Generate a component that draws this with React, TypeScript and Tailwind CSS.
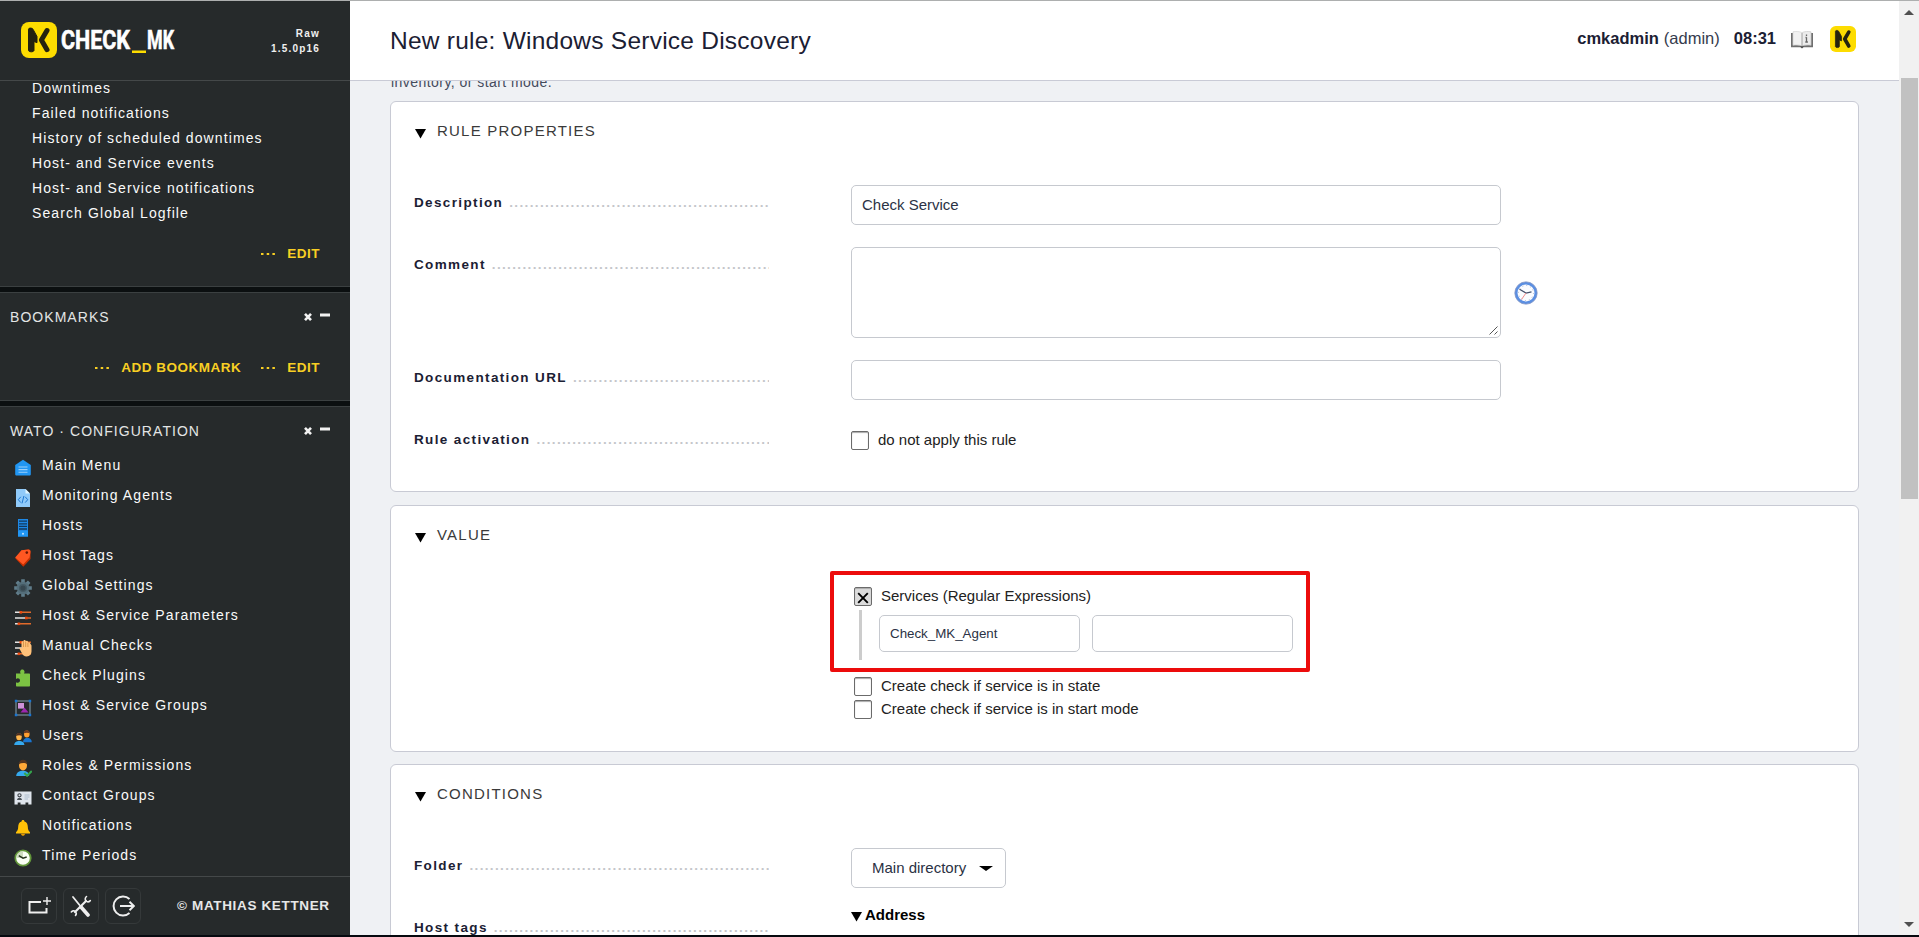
import React from "react";

const reports = [
  "Downtimes",
  "Failed notifications",
  "History of scheduled downtimes",
  "Host- and Service events",
  "Host- and Service notifications",
  "Search Global Logfile",
];

function Icon({ children }: { children: React.ReactNode }) {
  return (
    <svg width="18" height="18" viewBox="0 0 18 18" className="relative top-[3px] shrink-0">
      {children}
    </svg>
  );
}

function Sliders() {
  return (
    <>
      <path d="M1 3.3h6M1 9h10M1 14.8h3" stroke="#e4e4e4" strokeWidth="1.4" />
      <path d="M6 3.3h11M11 9h6M4 14.8h13" stroke="#e06a2b" strokeWidth="1.4" />
      <rect x="5.5" y="2" width="2.6" height="2.6" fill="#e8490f" />
      <rect x="11" y="7.7" width="2.6" height="2.6" fill="#e8490f" />
      <rect x="3.6" y="13.5" width="2.6" height="2.6" fill="#e8490f" />
    </>
  );
}

const menu: { label: string; icon: React.ReactNode }[] = [
  {
    label: "Main Menu",
    icon: (
      <>
        <path d="M9 .8 16.8 6v9.2c0 .8-.6 1.4-1.4 1.4H2.6c-.8 0-1.4-.6-1.4-1.4V6z" fill="#2196f3" />
        <path d="M4.5 8h9M4.5 10.6h9M4.5 13.2h9" stroke="#9bd0fb" strokeWidth="1.1" />
      </>
    ),
  },
  {
    label: "Monitoring Agents",
    icon: (
      <>
        <path d="M2 0h9.5l4.5 4.5V18H2z" fill="#90caf9" />
        <path d="M11.5 0v4.5H16z" fill="#e1f5fe" />
        <path d="M6.8 7.8 4.3 10.7l2.5 2.9M11.2 7.8l2.5 2.9-2.5 2.9M9.9 7 8 14.4" stroke="#1f78d1" fill="none" strokeWidth="1" />
      </>
    ),
  },
  {
    label: "Hosts",
    icon: (
      <>
        <rect x="4" y="0" width="10" height="17.5" fill="#1e88e5" />
        <path d="M5 2.2h8M5 4.8h8M5 7.4h8M5 10h8" stroke="#12395c" strokeWidth="1.3" />
        <rect x="4" y="12" width="10" height="5.5" fill="#2196f3" />
        <circle cx="9" cy="14.8" r="1" fill="#c5e6ff" />
      </>
    ),
  },
  {
    label: "Host Tags",
    icon: (
      <>
        <path d="M1.2 9.2 7.5 1.2 14.5.6c1.3 0 2 1 2 2.2V10L9.3 17.7z" fill="#c62f00" />
        <path d="M1.2 8.6 7.5 1.2 14.5.5c1.3 0 2 1 2 2.2L15.500 8.500 9.200 15.500z" fill="#ff5722" />
        <circle cx="12.8" cy="3.6" r="1.3" fill="#6b1500" />
      </>
    ),
  },
  {
    label: "Global Settings",
    icon: (
      <>
        <g stroke="#607d8b" strokeWidth="3.6">
          <path d="M9 .2v17.600M.2 9h17.600M2.800 2.800l12.400 12.400M15.200 2.800 2.800 15.200" />
        </g>
        <circle cx="9" cy="9" r="6.3" fill="#546e7a" />
        <circle cx="9" cy="9" r="3.3" fill="#37474f" stroke="#455a64" strokeWidth="1.4" />
      </>
    ),
  },
  { label: "Host & Service Parameters", icon: <Sliders /> },
  {
    label: "Manual Checks",
    icon: (
      <>
        <Sliders />
        <path d="M5.2 9.2c.6-.7 1.5-.6 2.3.3V3.3c0-1.4 1.9-1.4 2 0V2c0-1.4 2.1-1.4 2.2 0v.8c.2-1.3 2.1-1.2 2.2.1v1c.3-1.1 2-1 2.1.2l1.5 2.3v6.2c0 3-1.8 4.9-4.8 4.9-2.7 0-3.8-1.5-4.9-3.5z" fill="#ffc27a" />
        <path d="M9.5 3v5M11.7 3v5M13.9 4v4" stroke="#c98438" strokeWidth=".7" />
      </>
    ),
  },
  {
    label: "Check Plugins",
    icon: (
      <path d="M2 4.6h4.8c-1.2-1.7-.6-4.2 1.5-4.200s2.900 2.500 1.600 4.200H15c.6 0 1 .4 1 1V16.400c0 .6-.4 1-1 1H3c-.6 0-1-.4-1-1v-3.200c1.800 1.200 4 .5 4-1.600s-2.200-2.900-4-1.600z" fill="#7cc243" />
    ),
  },
  {
    label: "Host & Service Groups",
    icon: (
      <>
        <rect x="2" y="2" width="14" height="14" fill="none" stroke="#78909c" strokeWidth="1.2" />
        <rect x="4" y="4" width="6" height="5.6" fill="#ce93d8" />
        <path d="M6.500 13.600 10.500 8.500 14.500 13.600z" fill="#9c27b0" />
        <path d="M.8.8h2.500v2.500h-2.500zM14.700.8h2.500v2.500h-2.500zM.8 14.700h2.500v2.500h-2.500zM14.700 14.700h2.500v2.500h-2.500z" fill="#1976d2" />
      </>
    ),
  },
  {
    label: "Users",
    icon: (
      <>
        <ellipse cx="12.8" cy="5" rx="2.8" ry="3.5" fill="#ff9f2f" />
        <path d="M9.8 4.3c0-4 6-4 6 0-1.500-.9-4-.9-6 0z" fill="#6d3b24" />
        <path d="M9 13.200c0-6 8.800-6 8.800 0z" fill="#1976d2" />
        <ellipse cx="5" cy="7.8" rx="2.8" ry="3.5" fill="#ffb74d" />
        <path d="M2 7c0-4 6-4 6 0-1.500-.9-4-.9-6 0z" fill="#4e2d20" />
        <path d="M.2 16c0-5.500 10.200-5.500 10.200 0z" fill="#35a9ee" />
      </>
    ),
  },
  {
    label: "Roles & Permissions",
    icon: (
      <>
        <path d="M2.200 17c0-7 13-7 13 0z" fill="#35a9ee" />
        <ellipse cx="9" cy="6.5" rx="4" ry="5" fill="#ffa938" />
        <path d="M4.800 5.200c0-6 8.500-6 8.500 0-2-1.500-6-1.500-8.500 0z" fill="#55351f" />
        <path d="m10.300 14 2.800 2.800 4.700-4.800" stroke="#35a64d" strokeWidth="2" fill="none" />
      </>
    ),
  },
  {
    label: "Contact Groups",
    icon: (
      <>
        <path d="M.5 2.500h17v13h-3.200v-2h-2.800v2H6.500v-2H3.700v2H.5z" fill="#dfe5ec" />
        <circle cx="5.5" cy="6.3" r="1.6" fill="none" stroke="#3d4348" strokeWidth="1.1" />
        <path d="M3 11c.3-3 4.700-3 5 0z" fill="#4b5258" />
        <path d="M10.500 6h5M10.500 8h5M10.500 10h3.500" stroke="#a9b9cc" strokeWidth=".9" />
      </>
    ),
  },
  {
    label: "Notifications",
    icon: (
      <>
        <path d="M9 1c.9 0 1.400.6 1.400 1.400 2.600.8 3.400 3 3.400 5.400 0 3.400 1 4.300 2.200 5.400v1.200H2v-1.200c1.200-1.100 2.200-2 2.200-5.400 0-2.400.8-4.600 3.400-5.400C7.600 1.600 8.100 1 9 1z" fill="#ffc107" />
        <path d="M7 14.800c.2 2.700 3.800 2.700 4 0z" fill="#e59a00" />
      </>
    ),
  },
  {
    label: "Time Periods",
    icon: (
      <>
        <circle cx="9" cy="9" r="7.7" fill="#fafff5" stroke="#62963a" strokeWidth="1.8" />
        <path d="M9 9V2A7 7 0 0 0 2 9z" fill="#cfdcc0" />
        <path d="M4.800 6.600 9 9.200l3.700-1.200" stroke="#26331d" strokeWidth="1.4" fill="none" />
      </>
    ),
  },
];

function LogoMark({ size }: { size: number }) {
  return (
    <svg width={size} height={size} viewBox="0 0 36 36" className="shrink-0">
      <rect width="36" height="36" rx="8" fill="#fddc00" />
      <path
        d="M7.500 7.200c0-1.500 3.600-1.500 4.500 0l4 7.300v6.200l-3-1.200v9c0 1.800-5.500 1.800-5.500 0z"
        fill="#25230f"
        stroke="#25230f"
        strokeWidth="1"
        strokeLinejoin="round"
      />
      <path d="M26 8.500 20.400 18 26 27.700" stroke="#25230f" strokeWidth="5" strokeLinecap="round" strokeLinejoin="round" fill="none" />
    </svg>
  );
}

function SnapinHead({ title }: { title: string }) {
  return (
    <div className="flex h-[20px] items-center pl-[10px] pr-[20px] text-[14px] leading-[20px] tracking-[1.050px] text-[#e3e5e5]">
      <span className="flex-1">{title}</span>
      <svg width="27" height="10" viewBox="0 0 27 10">
        <path d="m2 1.800 6 6.400M8 1.800 2 8.200" stroke="#f2f2f2" strokeWidth="2.6" />
        <path d="M17 3h10" stroke="#f2f2f2" strokeWidth="3" />
      </svg>
    </div>
  );
}

function Action({ label }: { label: string }) {
  return (
    <span className="flex items-center text-[13.500px] font-bold leading-[20px] tracking-[0.500px] text-[#f8cf23]">
      <svg width="14" height="4" className="mr-[12px]">
        <path d="M0 1h2.500v2H0zM5.700 1h2.500v2H5.700zM11.400 1h2.500v2h-2.500z" fill="#f8cf23" />
      </svg>
      {label}
    </span>
  );
}

function Band() {
  return <div className="h-[7px] shrink-0 border-y border-[#3b4041] bg-[#0b0f10]" />;
}

function Sidebar() {
  return (
    <aside className="flex w-[350px] shrink-0 flex-col overflow-hidden bg-[#262a2b]">
      <div className="z-10 flex h-[80px] shrink-0 items-center border-b border-[#444849] bg-[#262a2b] pb-px pl-[21px] pr-[30px]">
        <LogoMark size={36} />
        <svg width="116" height="30" className="ml-[3px] mt-[2px] overflow-visible">
          <text x="1" y="23" textLength="69" lengthAdjust="spacingAndGlyphs" className="fill-white stroke-white stroke-[0.600px] font-['Roboto'] text-[25.500px] font-bold">CHECK</text>
          <rect x="72" y="24.5" width="14" height="2.5" fill="#fddc00" />
          <text x="87" y="23" textLength="27" lengthAdjust="spacingAndGlyphs" className="fill-white stroke-white stroke-[0.600px] font-['Roboto'] text-[25.500px] font-bold">MK</text>
        </svg>
        <div className="flex-1 pt-[2px] text-right text-[10px] font-bold leading-[15px] tracking-[1.200px] text-[#f0f0f0]">
          <div>Raw</div>
          <div>1.5.0p16</div>
        </div>
      </div>

      <div className="h-[205px] shrink-0 overflow-hidden">
        <ul className="-mt-[5px] pl-[32px] text-[14px] leading-[25px] tracking-[1.100px] text-[#fafafa]">
          {reports.map((r) => (
            <li key={r}>{r}</li>
          ))}
        </ul>
        <div className="mt-[18px] flex justify-end pr-[30px]">
          <Action label="EDIT" />
        </div>
      </div>
      <Band />
      <div className="h-[107px] shrink-0 pt-[14px]">
        <SnapinHead title="BOOKMARKS" />
        <div className="mt-[31px] flex justify-end gap-[20px] pr-[30px]">
          <Action label="ADD BOOKMARK" />
          <Action label="EDIT" />
        </div>
      </div>
      <Band />
      <div className="min-h-0 flex-1 pt-[14px]">
        <SnapinHead title="WATO · CONFIGURATION" />
        <ul className="mt-[9px]">
          {menu.map((m) => (
            <li key={m.label} className="flex h-[30px] items-center pl-[14px] text-[14px] leading-[30px] tracking-[1.120px] text-[#fafafa]">
              <Icon>{m.icon}</Icon>
              <span className="ml-[10px]">{m.label}</span>
            </li>
          ))}
        </ul>
      </div>
      <div className="flex h-[59px] shrink-0 items-center border-t border-[#444849] pl-[21px]">
        <div className="flex gap-[6px]">
          <div className="flex size-[36px] items-center justify-center rounded-[6px] border border-[#35393a]">
            <svg width="24" height="22" viewBox="0 0 24 22" fill="none" stroke="#eee">
              <path d="M14 7H2.500v10.500h17V13" strokeWidth="2" />
              <path d="M20 2v8M16 6h8" strokeWidth="1.4" />
            </svg>
          </div>
          <div className="flex size-[36px] items-center justify-center rounded-[6px] border border-[#35393a]">
            <svg width="22" height="22" viewBox="0 0 22 22" fill="none" stroke="#eee" strokeLinecap="round">
              <path d="m3 2 6.500 8" strokeWidth="1.8" />
              <path d="m11 12 7 8" strokeWidth="3.6" />
              <path d="M16 6 5 17" strokeWidth="2.2" />
              <path d="M16.500 1.500c-1.500 1.300-1.700 3.200-.5 4.500 1.300 1.200 3 .9 4.300-.4M5.500 20.500c1.200-1.500 1-2.800-.3-4C4 15.300 2.300 15.800 1.300 17" strokeWidth="1.6" />
            </svg>
          </div>
          <div className="flex size-[36px] items-center justify-center rounded-[6px] border border-[#35393a]">
            <svg width="24" height="24" viewBox="0 0 24 24" fill="none" stroke="#eee">
              <path d="M18.500 5A9.500 9.500 0 1 0 18.500 19" strokeWidth="2" />
              <path d="M9 12h13.500M18.500 7.800l4.300 4.200-4.300 4.200" strokeWidth="2" />
            </svg>
          </div>
        </div>
        <span className="ml-[36px] text-[13.500px] font-bold leading-[20px] tracking-[0.650px] text-[#e6e8e8]">© MATHIAS KETTNER</span>
      </div>
    </aside>
  );
}

function Triangle() {
  return (
    <svg width="11" height="10" className="shrink-0">
      <path d="M0 0h11L5.500 9.500z" fill="#000" />
    </svg>
  );
}

function PanelTitle({ children }: { children: string }) {
  return (
    <div className="flex h-[20px] items-center pl-[24px] text-[15px] leading-[20px] tracking-[1.220px] text-[#3a3a3a]">
      <span className="relative top-[3px] flex">
        <Triangle />
      </span>
      <span className="ml-[11px]">{children}</span>
    </div>
  );
}

function Row({ label, children, className }: { label: string; children: React.ReactNode; className: string }) {
  return (
    <div className={`flex items-start pl-[23px] ${className}`}>
      <div className="mt-[8px] flex w-[355px] gap-[6px] overflow-hidden whitespace-nowrap text-[13.500px] leading-[20px] tracking-[1.360px]">
        <span className="font-bold text-[#1b2033]">{label}</span>
        <span className="flex-1 overflow-hidden font-bold text-[#c4c6ca]">{".".repeat(64)}</span>
      </div>
      <div className="ml-[82px] flex">{children}</div>
    </div>
  );
}

function Checkbox({ checked = false }: { checked?: boolean }) {
  return (
    <span
      className={`flex h-[19px] w-[18px] shrink-0 items-center justify-center rounded-[2px] border border-[#6b6b6b] ${
        checked ? "bg-[#dcdcdc]" : "bg-white"
      } shadow-[inset_0_1px_1px_#aaaaaa]`}
    >
      {checked && (
        <svg width="12" height="12" viewBox="0 0 12 12" className="relative top-[1px]">
          <path d="m1.200 1.200 9.600 9.600M10.800 1.200 1.200 10.800" stroke="#000" strokeWidth="1.9" />
        </svg>
      )}
    </span>
  );
}

function ClockIcon() {
  return (
    <svg width="24" height="24" viewBox="0 0 24 24" className="ml-[13px] mt-[34px]">
      <circle cx="12" cy="12" r="9.8" fill="#fbfcff" stroke="#5b8fe2" strokeWidth="2.6" />
      <circle cx="12" cy="12" r="11.2" fill="none" stroke="#8194c4" strokeWidth=".8" />
      <circle cx="12" cy="12" r="7.5" fill="none" stroke="#a8b3cc" strokeWidth="1" strokeDasharray="1 2.93" />
      <path d="M5.500 8.200 12 12l5.500-1.200" stroke="#46506b" strokeWidth="1.2" fill="none" />
      <path d="m12 12-4.500 6.500" stroke="#f08a8a" strokeWidth="1" />
    </svg>
  );
}

function Header() {
  return (
    <header className="z-10 flex h-[80px] shrink-0 items-center border-b border-[#c9cbd6] bg-white pl-[40px] pr-[43px] text-[#1b2033]">
      <h1 className="flex-1 text-[24.500px] leading-[30px] tracking-[0.240px]">New rule: Windows Service Discovery</h1>
      <div className="relative top-[-2px] flex items-center text-[16.500px] leading-[20px]">
        <b className="relative top-[-1px]">cmkadmin</b>
        <span className="relative top-[-1px] ml-[5px] text-[#353b4d]">(admin)</span>
        <b className="relative top-[-1px] ml-[14px]">08:31</b>
        <svg width="22" height="18" viewBox="0 0 22 18" className="ml-[15px] mt-[2px]">
          <path d="M.7 2v13.500h20.600V2" fill="#8a8a8a" stroke="#6f6f6f" strokeWidth="1.4" />
          <path d="M2 .8c3-.6 6-.4 8.600.6v13.400C8 13.800 5 13.700 2 14.200z" fill="#f2f2f2" stroke="#cfcfcf" strokeWidth=".6" />
          <path d="M20 .8c-3-.6-6-.4-8.600.6v13.400c2.600-1 5.600-1.100 8.600-.6z" fill="#ececec" stroke="#c4c4c4" strokeWidth=".6" />
          <path d="M9 15.500h4l-2 2z" fill="#444" />
          <path d="M15.500 3.500v1.600M15.500 6.200v5M14.300 11h2.600M14.500 6.500h1" stroke="#666" strokeWidth="1.3" />
        </svg>
        <span className="ml-[17px] flex">
          <LogoMark size={26} />
        </span>
      </div>
    </header>
  );
}

function Content() {
  const panel = "shrink-0 rounded-[6px] border border-[#c8cad4] bg-white";
  const field = "rounded-[5px] border border-[#c6c9cf] bg-white text-[#2b3244]";
  return (
    <div className="min-h-0 flex-1 overflow-hidden bg-[#eff1f4] pl-[40px] pr-[40px]">
      <p className="-mt-[9px] h-[29px] pl-px text-[14px] leading-[20px] tracking-[0.450px] text-[#444b5c]">inventory, or start mode.</p>

      <section className={`${panel} h-[391px] pt-[19px]`}>
        <PanelTitle>RULE PROPERTIES</PanelTitle>
        <Row label="Description" className="mt-[44px] h-[62px]">
          <div className={`${field} h-[40px] w-[650px] pl-[10px] text-[15px] leading-[38px]`}>Check Service</div>
        </Row>
        <Row label="Comment" className="h-[113px]">
          <div className={`${field} flex h-[91px] w-[650px] items-end justify-end`}>
            <svg width="11" height="11">
              <path d="m.5 8.500 8-8M5.500 8.500l3-3" stroke="#555" strokeWidth="1" />
            </svg>
          </div>
          <ClockIcon />
        </Row>
        <Row label="Documentation URL" className="h-[62px]">
          <div className={`${field} h-[40px] w-[650px]`} />
        </Row>
        <Row label="Rule activation" className="h-[40px]">
          <div className="mt-[9px] flex h-[19px] items-center">
            <Checkbox />
            <span className="relative top-[-1px] ml-[9px] text-[15px] leading-[20px] text-[#222222]">do not apply this rule</span>
          </div>
        </Row>
      </section>

      <section className={`${panel} mt-[13px] h-[247px] pt-[19px]`}>
        <PanelTitle>VALUE</PanelTitle>
        <div className="ml-[439px] mt-[26px] h-[101px] w-[480px] rounded-[2px] border-[4px] border-[#ec0c0c] pl-[20px] pt-[12px]">
          <div className="flex h-[19px] items-center">
            <Checkbox checked />
            <span className="relative top-[-1px] ml-[9px] text-[15px] leading-[20px] text-[#222222]">Services (Regular Expressions)</span>
          </div>
          <div className="ml-[5px] mt-[4px] flex h-[50px] border-l-[3px] border-[#cccccc] pl-[17px] pt-[5px]">
            <div className={`${field} h-[37px] w-[201px] pl-[10px] text-[13.330px] leading-[35px]`}>Check_MK_Agent</div>
            <div className={`${field} ml-[12px] h-[37px] w-[201px]`} />
          </div>
        </div>
        <div className="ml-[463px] mt-[5px] flex flex-col gap-[4px] text-[15px] leading-[20px] text-[#222222]">
          {["Create check if service is in state", "Create check if service is in start mode"].map((t) => (
            <div key={t} className="flex h-[19px] items-center">
              <Checkbox />
              <span className="relative top-[-1px] ml-[9px]">{t}</span>
            </div>
          ))}
        </div>
      </section>

      <section className={`${panel} mt-[12px] h-[300px] pt-[19px]`}>
        <PanelTitle>CONDITIONS</PanelTitle>
        <Row label="Folder" className="mt-[44px] h-[62px]">
          <div className={`${field} flex h-[40px] w-[155px] items-center pl-[20px] text-[15px] leading-[38px]`}>
            Main directory
            <svg width="14" height="5" className="ml-[13px]">
              <path d="M0 0h14L7 5z" fill="#000" />
            </svg>
          </div>
        </Row>
        <Row label="Host tags" className="h-[60px]">
          <div className="flex h-[10px] items-center text-[15px] font-bold leading-[10px] text-black">
            <span className="relative top-[2px] flex">
              <Triangle />
            </span>
            <span className="ml-[3px]">Address</span>
          </div>
        </Row>
      </section>
    </div>
  );
}

function Scrollbar() {
  return (
    <div className="flex w-[20px] shrink-0 flex-col items-center justify-between bg-[#f1f1f1] pb-[8px] pt-[9px]">
      <svg width="10" height="5">
        <path d="M0 5 5 0l5 5z" fill="#505050" />
      </svg>
      <div className="mb-auto mt-[63px] h-[421px] w-[17px] bg-[#c1c1c1]" />
      <svg width="10" height="5">
        <path d="m0 0 5 5 5-5z" fill="#505050" />
      </svg>
    </div>
  );
}

export default function App() {
  return (
    <div className="flex h-[937px] w-[1919px] flex-col overflow-hidden border-b-2 border-t border-b-[#06090f] border-t-[#adafaf] font-['Liberation_Sans',Arial,sans-serif]">
      <div className="flex min-h-0 flex-1">
        <Sidebar />
        <main className="flex min-w-0 flex-1 flex-col">
          <Header />
          <Content />
        </main>
        <Scrollbar />
      </div>
    </div>
  );
}
